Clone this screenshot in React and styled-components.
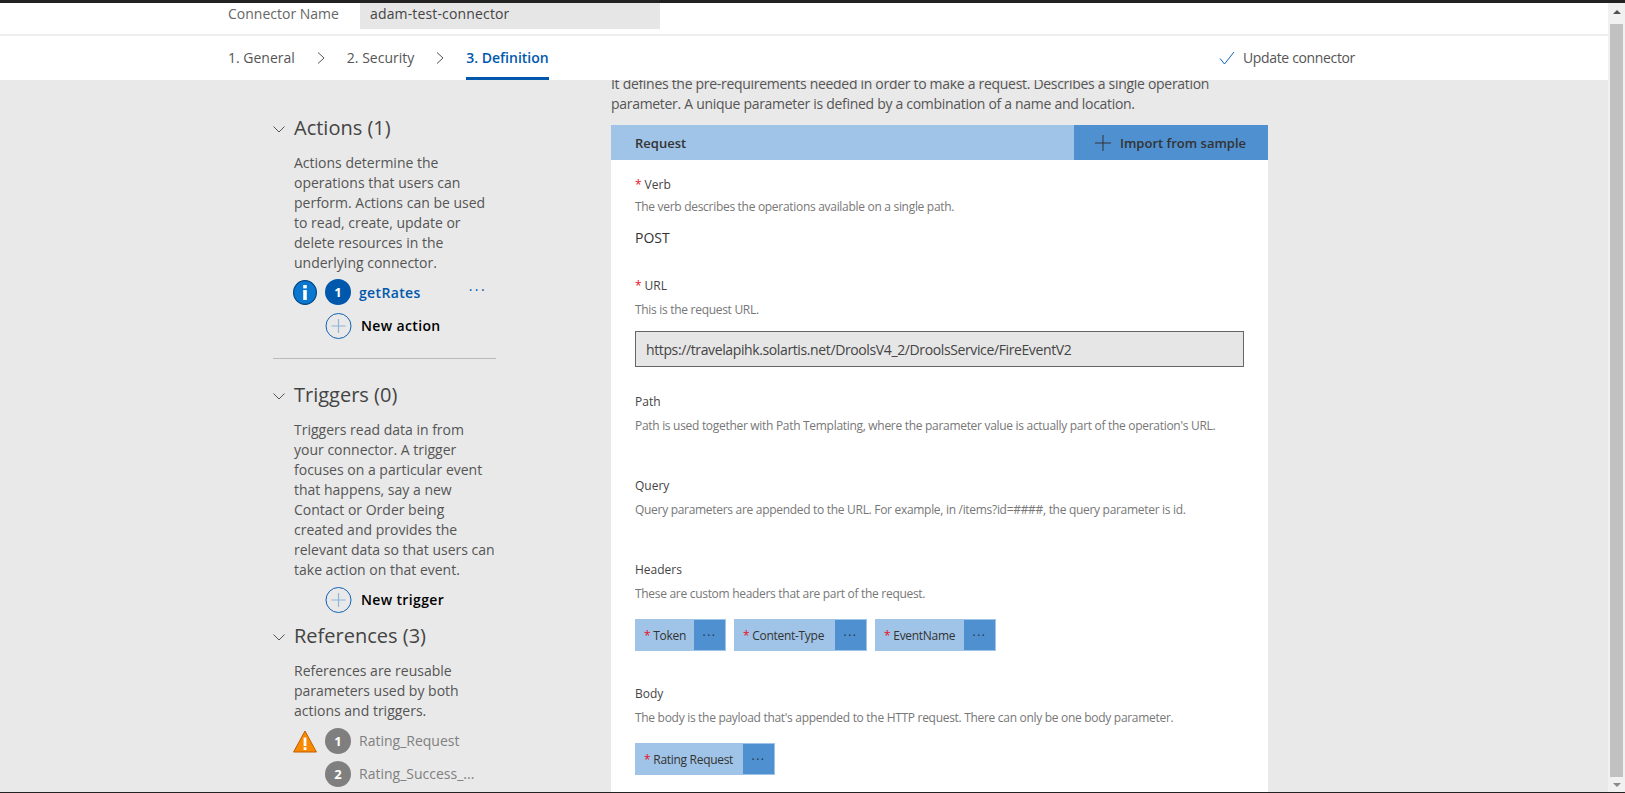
import React from 'react';
import styled, { createGlobalStyle } from 'styled-components';

const GlobalStyle = createGlobalStyle`
  html, body { margin: 0; padding: 0; height: 100%; overflow: hidden; }
  body { font-family: "Open Sans", "Noto Sans", sans-serif; color: #333; }
  * { box-sizing: border-box; }
`;

const Chevron = ({ dir = 'right', size = 12 }) => (
  <svg width={size} height={size} viewBox="0 0 12 12" fill="none" stroke="#555" strokeWidth="1">
    {dir === 'right' ? <path d="M3 0.5 L9 6 L3 11.5" /> : <path d="M0.5 3.5 L6 9 L11.5 3.5" />}
  </svg>
);

const PlusCircle = () => (
  <svg width="27" height="26" viewBox="0 0 27 26" fill="none">
    <circle cx="13.5" cy="13" r="12.5" stroke="#0f62b5" />
    <path d="M13.5 6 V20 M6.5 13 H20.5" stroke="#8fb4d8" strokeWidth="1.2" />
  </svg>
);

const InfoIcon = () => (
  <svg width="24" height="25" viewBox="0 0 24 25">
    <ellipse cx="12" cy="12.5" rx="11.4" ry="11.9" fill="#0a78d0" stroke="#06467f" strokeWidth="1.2" />
    <rect x="10.2" y="10" width="3.6" height="10" fill="#fff" />
    <rect x="10.2" y="5" width="3.6" height="3.4" fill="#fff" />
  </svg>
);

const WarningIcon = () => (
  <svg width="24" height="23" viewBox="0 0 24 23">
    <path d="M12 1 L23.4 22 H0.6 Z" fill="#f98a00" stroke="#c25e00" strokeWidth="1" strokeLinejoin="round" />
    <rect x="10.6" y="7.5" width="2.8" height="8.5" fill="#fff" />
    <rect x="10.6" y="17.2" width="2.8" height="2.8" fill="#fff" />
  </svg>
);

const Page = styled.div`
  display: flex;
  flex-direction: column;
  height: 793px;
  border-top: 3px solid #222;
  border-bottom: 1px solid #222;
  overflow: hidden;
`;

const Frame = styled.div`
  display: flex;
  flex: 1;
  min-height: 0;
`;

const Content = styled.div`
  display: flex;
  flex-direction: column;
  flex: 1;
  min-width: 0;
`;

const Scrollbar = styled.div`
  display: flex;
  flex-direction: column;
  align-items: center;
  width: 17px;
  background: #f1f1f1;
`;

const ScrollArrow = styled.div`
  flex: none;
  width: 0;
  height: 0;
  margin: ${(p) => (p.$down ? '6px 0 5px' : '7px 0 10px')};
  border-left: 4px solid transparent;
  border-right: 4px solid transparent;
  ${(p) => (p.$down ? 'border-top: 4px solid #8a8a8a;' : 'border-bottom: 4px solid #505050;')}
`;

const ScrollThumb = styled.div`
  flex: 1;
  width: 13px;
  background: #c1c1c1;
`;

const NameBar = styled.div`
  display: flex;
  align-items: flex-start;
  height: 33px;
  padding-left: 228px;
  background: #fff;
  border-bottom: 2px solid #eee;
`;

const NameLabel = styled.div`
  width: 132px;
  font-size: 14px;
  line-height: 21px;
  color: #666;
`;

const NameInput = styled.div`
  width: 300px;
  height: 26px;
  padding-left: 10px;
  font-size: 14px;
  letter-spacing: 0.15px;
  line-height: 21px;
  color: #444;
  background: #e6e6e6;
`;

const NavBar = styled.div`
  position: relative;
  z-index: 1;
  display: flex;
  align-items: stretch;
  height: 44px;
  padding: 0 253px 0 228px;
  background: #fff;
`;

const Step = styled.div`
  display: flex;
  align-items: center;
  padding-top: 2px;
  font-size: 14px;
  font-weight: ${(p) => (p.$active ? 600 : 400)};
  color: ${(p) => (p.$active ? '#0058ad' : '#555')};
  border-bottom: 3px solid ${(p) => (p.$active ? '#0058ad' : 'transparent')};
`;

const StepArrow = styled.div`
  display: flex;
  align-items: center;
  justify-content: center;
  width: 52px;
  padding-bottom: 1px;
`;

const UpdateButton = styled.div`
  display: flex;
  align-items: center;
  gap: 8px;
  margin-left: auto;
  padding-bottom: 1px;
  font-size: 14px;
  letter-spacing: -0.35px;
  color: #555;
`;

const Body = styled.div`
  display: flex;
  flex: 1;
  min-height: 0;
  padding-left: 273px;
  background: #e9e9e9;
  overflow: hidden;
`;

const Sidebar = styled.aside`
  flex: none;
  width: 223px;
  padding-top: 34px;
`;

const SectionTitle = styled.div`
  display: flex;
  align-items: center;
  height: 28px;
  margin-top: ${(p) => p.$top || 0}px;
  padding-bottom: 2px;
  font-size: 20px;
  color: #444;
`;

const TitleChevron = styled.span`
  display: flex;
  width: 21px;
  padding-top: 4px;
`;

const SectionText = styled.p`
  margin: 11px 0 0 21px;
  font-size: 14px;
  line-height: 20px;
  color: #555;
`;

const ItemRow = styled.div`
  display: flex;
  align-items: center;
  height: 26px;
  margin-top: ${(p) => p.$top}px;
  padding-left: 20px;
`;

const StatusSlot = styled.span`
  display: flex;
  align-items: center;
  width: 32px;
  flex: none;
`;

const Badge = styled.span`
  display: flex;
  align-items: center;
  justify-content: center;
  flex: none;
  width: 26px;
  height: 26px;
  border-radius: 50%;
  font-size: 13px;
  font-weight: 700;
  color: #fff;
  background: ${(p) => (p.$active ? '#0058ad' : '#7f7f7f')};
`;

const ItemName = styled.span`
  flex: 1;
  margin-left: 8px;
  padding-bottom: ${(p) => (p.$active ? 0 : 2)}px;
  font-size: 14px;
  font-weight: ${(p) => (p.$active ? 600 : 400)};
  letter-spacing: ${(p) => (p.$active ? 0.35 : 0)}px;
  color: ${(p) => (p.$active ? '#0058ad' : '#808080')};
  white-space: nowrap;
`;

const MoreDots = styled.span`
  margin: -4px 9px 0 0;
  font-size: 14px;
  letter-spacing: 2.4px;
  line-height: 14px;
  color: #0058ad;
`;

const NewLabel = styled.span`
  margin-left: 9px;
  padding-bottom: 2px;
  font-size: 14px;
  font-weight: 600;
  letter-spacing: 0.35px;
  color: #000;
`;

const Divider = styled.hr`
  height: 1px;
  margin: 19px 0 0;
  border: 0;
  background: #bbb;
`;

const Main = styled.main`
  flex: none;
  width: 657px;
  margin: -6px 0 0 115px;
`;

const Intro = styled.p`
  margin: 0 0 11px;
  width: 625px;
  font-size: 14px;
  letter-spacing: -0.3px;
  line-height: 20px;
  color: #555;
`;

const Card = styled.section`
  background: #fff;
  padding-bottom: 60px;
`;

const CardHeader = styled.div`
  display: flex;
  align-items: center;
  height: 35px;
  padding-left: 24px;
  font-size: 13px;
  font-weight: 600;
  color: #333;
  background: #a0c4e7;
`;

const CardTitle = styled.span`
  flex: 1;
`;

const ImportButton = styled.div`
  display: flex;
  align-items: center;
  gap: 9px;
  width: 194px;
  height: 100%;
  padding-left: 21px;
  background: #4f90d0;
`;

const CardBody = styled.div`
  padding: 17px 24px 0;
`;

const Field = styled.div`
  margin-top: ${(p) => p.$top || 0}px;
`;

const Label = styled.div`
  font-size: 12px;
  line-height: 16px;
  color: #444;
`;

const Required = styled.span`
  margin-right: 3px;
  color: #e81123;
`;

const Hint = styled.div`
  margin-top: ${(p) => p.$gap || 8}px;
  font-size: 12px;
  letter-spacing: -0.3px;
  line-height: 16px;
  color: #777;
`;

const Verb = styled.div`
  margin-top: 13px;
  font-size: 14px;
  font-weight: 500;
  line-height: 20px;
  color: #333;
`;

const UrlInput = styled.div`
  display: flex;
  align-items: center;
  width: 609px;
  height: 36px;
  margin-top: 13px;
  padding-left: 10px;
  font-size: 14px;
  letter-spacing: -0.38px;
  color: #444;
  background: #e6e6e6;
  border: 1px solid #666;
`;

const Tags = styled.div`
  display: flex;
  gap: 8px;
  margin-top: 17px;
`;

const Tag = styled.div`
  display: flex;
  align-items: center;
  width: ${(p) => p.$width}px;
  height: 32px;
  padding-left: 8px;
  font-size: 12px;
  color: #333;
  background: #a0c4e7;
  border: 1px solid #a0c4e7;
`;

const TagName = styled.span`
  flex: 1;
  letter-spacing: -0.3px;
  white-space: nowrap;
`;

const TagMore = styled.span`
  display: flex;
  align-items: center;
  justify-content: center;
  flex: none;
  width: 31px;
  height: 100%;
  letter-spacing: 1.5px;
  font-size: 12px;
  color: #234;
  background: #4f90d0;
`;

const headers = [
  { name: 'Token', width: 91 },
  { name: 'Content-Type', width: 133 },
  { name: 'EventName', width: 121 },
];

function ParamTag({ name, width }) {
  return (
    <Tag $width={width}>
      <TagName><Required>*</Required>{name}</TagName>
      <TagMore>···</TagMore>
    </Tag>
  );
}

export default function App() {
  return (
    <Page>
      <GlobalStyle />
      <Frame>
        <Content>
          <NameBar>
            <NameLabel>Connector Name</NameLabel>
            <NameInput>adam-test-connector</NameInput>
          </NameBar>
          <NavBar>
            <Step>1. General</Step>
            <StepArrow><Chevron /></StepArrow>
            <Step>2. Security</Step>
            <StepArrow><Chevron /></StepArrow>
            <Step $active>3. Definition</Step>
            <UpdateButton>
              <svg width="16" height="14" viewBox="0 0 16 14" fill="none" stroke="#0f62b5" strokeWidth="1">
                <path d="M1 7.5 L5.5 13 L15 1" />
              </svg>
              Update connector
            </UpdateButton>
          </NavBar>
          <Body>
            <Sidebar>
              <SectionTitle>
                <TitleChevron><Chevron dir="down" /></TitleChevron>
                Actions (1)
              </SectionTitle>
              <SectionText>
                Actions determine the operations that users can perform. Actions can be used to read, create, update or delete resources in the underlying connector.
              </SectionText>
              <ItemRow $top={6}>
                <StatusSlot><InfoIcon /></StatusSlot>
                <Badge $active>1</Badge>
                <ItemName $active>getRates</ItemName>
                <MoreDots>···</MoreDots>
              </ItemRow>
              <ItemRow $top={8}>
                <StatusSlot />
                <PlusCircle />
                <NewLabel>New action</NewLabel>
              </ItemRow>
              <Divider />
              <SectionTitle $top={22}>
                <TitleChevron><Chevron dir="down" /></TitleChevron>
                Triggers (0)
              </SectionTitle>
              <SectionText>
                Triggers read data in from your connector. A trigger focuses on a particular event that happens, say a new Contact or Order being created and provides the relevant data so that users can take action on that event.
              </SectionText>
              <ItemRow $top={7}>
                <StatusSlot />
                <PlusCircle />
                <NewLabel>New trigger</NewLabel>
              </ItemRow>
              <SectionTitle $top={9}>
                <TitleChevron><Chevron dir="down" /></TitleChevron>
                References (3)
              </SectionTitle>
              <SectionText>
                References are reusable parameters used by both actions and triggers.
              </SectionText>
              <ItemRow $top={7}>
                <StatusSlot><WarningIcon /></StatusSlot>
                <Badge>1</Badge>
                <ItemName>Rating_Request</ItemName>
              </ItemRow>
              <ItemRow $top={7}>
                <StatusSlot />
                <Badge>2</Badge>
                <ItemName>Rating_Success_...</ItemName>
              </ItemRow>
            </Sidebar>
            <Main>
              <Intro>
                It defines the pre-requirements needed in order to make a request. Describes a single operation parameter. A unique parameter is defined by a combination of a name and location.
              </Intro>
              <Card>
                <CardHeader>
                  <CardTitle>Request</CardTitle>
                  <ImportButton>
                    <svg width="16" height="16" viewBox="0 0 16 16" stroke="#333" strokeWidth="1">
                      <path d="M8 0 V16 M0 8 H16" />
                    </svg>
                    Import from sample
                  </ImportButton>
                </CardHeader>
                <CardBody>
                  <Field>
                    <Label><Required>*</Required>Verb</Label>
                    <Hint $gap={6}>The verb describes the operations available on a single path.</Hint>
                    <Verb>POST</Verb>
                  </Field>
                  <Field $top={30}>
                    <Label><Required>*</Required>URL</Label>
                    <Hint>This is the request URL.</Hint>
                    <UrlInput>https://travelapihk.solartis.net/DroolsV4_2/DroolsService/FireEventV2</UrlInput>
                  </Field>
                  <Field $top={27}>
                    <Label>Path</Label>
                    <Hint>Path is used together with Path Templating, where the parameter value is actually part of the operation's URL.</Hint>
                  </Field>
                  <Field $top={44}>
                    <Label>Query</Label>
                    <Hint>Query parameters are appended to the URL. For example, in /items?id=####, the query parameter is id.</Hint>
                  </Field>
                  <Field $top={44}>
                    <Label>Headers</Label>
                    <Hint>These are custom headers that are part of the request.</Hint>
                    <Tags>
                      {headers.map((h) => (
                        <ParamTag key={h.name} name={h.name} width={h.width} />
                      ))}
                    </Tags>
                  </Field>
                  <Field $top={35}>
                    <Label>Body</Label>
                    <Hint>The body is the payload that's appended to the HTTP request. There can only be one body parameter.</Hint>
                    <Tags>
                      <ParamTag name="Rating Request" width={140} />
                    </Tags>
                  </Field>
                </CardBody>
              </Card>
            </Main>
          </Body>
        </Content>
        <Scrollbar>
          <ScrollArrow />
          <ScrollThumb />
          <ScrollArrow $down />
        </Scrollbar>
      </Frame>
    </Page>
  );
}
